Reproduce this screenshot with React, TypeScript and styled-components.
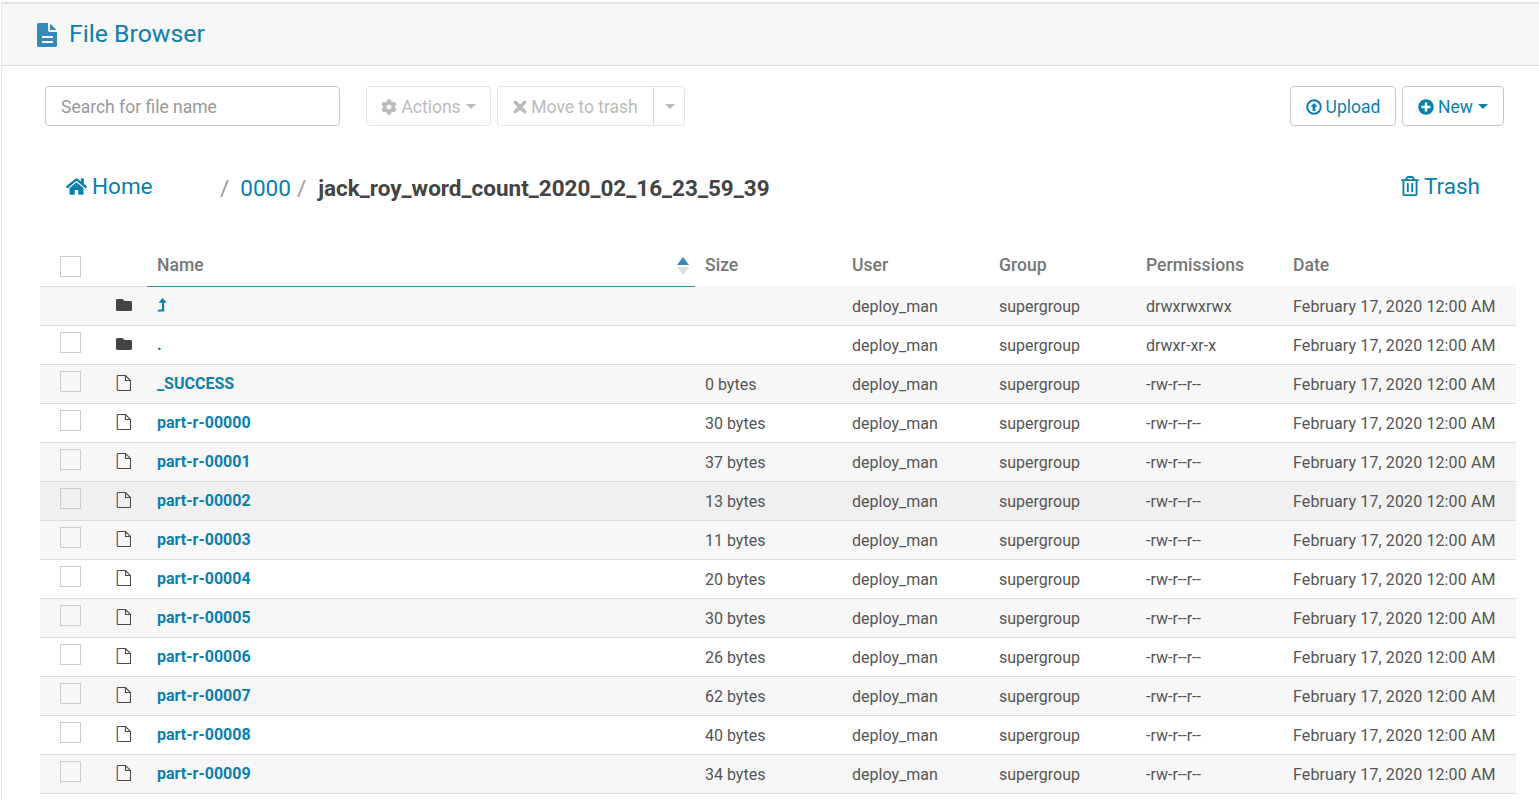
import React from "react";
import styled, { createGlobalStyle } from "styled-components";
import { FaCog, FaHome, FaFolder, FaPlusCircle, FaRegTrashAlt } from "react-icons/fa";

const Global = createGlobalStyle`
  html, body { margin: 0; padding: 0; background: #fff; overflow: hidden; }
  body { font-family: Roboto, "Liberation Sans", sans-serif; color: #444; }
  * { box-sizing: border-box; }
`;

const Page = styled.div`
  margin-top: 2px;
  margin-left: 1px;
  border-top: 2px solid #e3e3e3;
  border-left: 1px solid #e8e8e8;
  height: 798px;
`;
const TitleBar = styled.header`
  height: 62px;
  background: #f7f7f7;
  border-bottom: 1px solid #ddd;
  display: flex;
  align-items: center;
  padding: 0 0 0 35px;
  gap: 12px;
`;
const Title = styled.h1`
  margin: 0 0 2px;
  font-size: 24.8px;
  font-weight: 400;
  line-height: 28px;
  color: #0b7fad;
`;
const Toolbar = styled.div`
  display: flex;
  align-items: center;
  padding: 20px 35px 0 43px;
`;
const Search = styled.input`
  width: 295px;
  height: 40px;
  border: 1px solid #c8c8c8;
  border-radius: 4px;
  padding: 2px 15px 0;
  font: 400 17.5px Roboto, sans-serif;
  color: #444;
  margin-right: 26px;
  &::placeholder { color: #999; opacity: 1; }
`;
const Btn = styled.button<{ $w: number; $on?: boolean; $group?: "l" | "r" }>`
  width: ${(p) => p.$w}px;
  height: 40px;
  background: #fff;
  border: 1px solid ${(p) => (p.$on ? "#c8c8c8" : "#e6e6e6")};
  border-radius: ${(p) => (p.$group === "l" ? "4px 0 0 4px" : p.$group === "r" ? "0 4px 4px 0" : "4px")};
  ${(p) => (p.$group === "r" ? "border-left-color:#d8d8d8;" : "")}
  ${(p) => (p.$group === "l" ? "border-right:0;" : "")}
  color: ${(p) => (p.$on ? "#0b7fad" : "#bbb")};
  font: 400 17.5px Roboto, sans-serif;
  display: flex;
  align-items: center;
  justify-content: center;
  gap: 4px;
  padding: 1px 0 0;
`;
const Gap = styled.div<{ $w: number }>`
  width: ${(p) => p.$w}px;
  flex: none;
`;
const Spacer = styled.div`
  flex: 1;
`;
const Caret = styled.span`
  display: inline-block;
  width: 0;
  height: 0;
  margin-left: 1px;
  border-left: 5px solid transparent;
  border-right: 5px solid transparent;
  border-top: 5px solid currentColor;
`;
const Crumbs = styled.nav`
  display: flex;
  align-items: center;
  height: 44px;
  margin-top: 40px;
  padding: 0 59px 0 64px;
  font-size: 22.5px;
  color: #0b7fad;
`;
const HomeLink = styled.a`
  display: flex;
  align-items: center;
  gap: 5px;
  width: 154px;
  margin-top: -4px;
`;
const Sep = styled.span`
  color: #999;
  margin: 0 10px 0 0;
`;
const Crumb = styled.a`
  margin: 0 6px 0 1px;
`;
const Current = styled.strong`
  font-weight: 700;
  font-size: 22.5px;
  color: #444;
  margin-left: 2px;
`;
const TrashLink = styled.a`
  margin-left: auto;
  display: flex;
  align-items: center;
  gap: 4px;
  margin-top: -4px;
`;
const Table = styled.table`
  width: 1476px;
  margin: 34px 0 0 38px;
  border-collapse: collapse;
  table-layout: fixed;
`;
const Col = styled.col<{ $w: number }>`
  width: ${(p) => p.$w}px;
`;
const Th = styled.th<{ $sorted?: boolean }>`
  height: 42px;
  padding: 0 0 0 10px;
  text-align: left;
  font-size: 17.6px;
  font-weight: 500;
  color: #777;
  position: relative;
  vertical-align: middle;
  border-bottom: 1px solid ${(p) => (p.$sorted ? "#338bb8" : "transparent")};
`;
const Tr = styled.tr<{ $bg: string }>`
  background: ${(p) => p.$bg};
  height: 39px;
`;
const Td = styled.td`
  padding: 1px 0 0 10px;
  border-top: 1px solid #ddd;
  border-bottom: 1px solid #ddd;
  white-space: nowrap;
  color: #555;
  font-size: 16px;
  vertical-align: middle;
`;
const NameCell = styled(Td)`
  padding-top: 0;
`;
const DateCell = styled(Td)`
  letter-spacing: 0.12px;
`;
const CheckCell = styled.td`
  padding: 0 0 4px 20px;
  border-top: 1px solid #ddd;
  border-bottom: 1px solid #ddd;
`;
const HeadCheckCell = styled.th`
  padding: 4px 0 0 20px;
  vertical-align: middle;
`;
const Check = styled.div`
  width: 21px;
  height: 21px;
  border: 1.5px solid #ccc;
  background: transparent;
`;
const IconCell = styled.td`
  padding: 0 0 2px 9px;
  border-top: 1px solid #ddd;
  border-bottom: 1px solid #ddd;
  vertical-align: middle;
  color: #444;
`;
const IconWrap = styled.div`
  display: flex;
`;
const NameLink = styled.a`
  font-weight: 700;
  color: #0b7fad;
  font-size: 16px;
  display: inline-flex;
  align-items: center;
`;
const LevelSvg = styled.svg`
  margin-top: 2px;
`;
const SortArrows = styled.svg`
  position: absolute;
  right: 5px;
  top: 12px;
`;

type Row = { name: string; size: string; perm: string; kind: "up" | "dir" | "file"; noCheck?: boolean };
const rows: Row[] = [
  { name: "", size: "", perm: "drwxrwxrwx", kind: "up", noCheck: true },
  { name: ".", size: "", perm: "drwxr-xr-x", kind: "dir" },
  { name: "_SUCCESS", size: "0 bytes", perm: "-rw-r--r--", kind: "file" },
  ...[30, 37, 13, 11, 20, 30, 26, 62, 40, 34].map((n, i) => ({
    name: `part-r-0000${i}`,
    size: `${n} bytes`,
    perm: "-rw-r--r--",
    kind: "file" as const,
  })),
];

function DocIcon() {
  return (
    <svg width="20" height="24" viewBox="0 0 20 24">
      <path
        d="M1.5 0H11v7.5c0 .8.7 1.5 1.5 1.5H20v13.5c0 .8-.7 1.5-1.5 1.5h-17C.7 24 0 23.3 0 22.5v-21C0 .7.7 0 1.5 0zM13 0.6L19.4 7H13z"
        fill="#338bb8"
      />
      <path d="M5 13h11v2H5zM5 18h11v2H5z" fill="#f7f7f7" />
    </svg>
  );
}
function UploadIcon() {
  return (
    <svg width="16" height="16" viewBox="0 0 16 16" fill="none">
      <circle cx="8" cy="8" r="6.8" stroke="currentColor" strokeWidth="2" />
      <path d="M8 4l3.6 3.8H9.4V12H6.6V7.8H4.4z" fill="currentColor" />
    </svg>
  );
}
function TimesIcon() {
  return (
    <svg width="14" height="14" viewBox="0 0 14 14">
      <path d="M2.5 2.5l9 9M11.5 2.5l-9 9" stroke="currentColor" strokeWidth="3.6" strokeLinecap="round" />
    </svg>
  );
}
function FileOutline() {
  return (
    <svg width="15" height="16" viewBox="0 0 15 16" fill="none">
      <path d="M1.5 .5H9.5L14.5 5.5V15.5H1.5Z" stroke="#4a4a4a" strokeWidth="1.1" />
      <path d="M9.5 .5V5.5H14.5" stroke="#4a4a4a" strokeWidth="1.1" />
      <path d="M1 .5V15.5" stroke="#c98a4b" strokeWidth="1" />
    </svg>
  );
}
function LevelUp() {
  return (
    <LevelSvg width="10" height="14" viewBox="0 0 10 14">
      <path d="M5.5 0L9.6 4.8H7.1V13.4H0.4L1.7 11.5H5V4.8H1.6Z" fill="currentColor" />
    </LevelSvg>
  );
}

const columns = [67, 40, 548, 147, 147, 147, 147, 233];

export default function App() {
  return (
    <Page>
      <Global />
      <TitleBar>
        <DocIcon />
        <Title>File Browser</Title>
      </TitleBar>
      <Toolbar>
        <Search placeholder="Search for file name" />
        <Btn $w={125}>
          <FaCog size={16} /> Actions <Caret />
        </Btn>
        <Gap $w={6} />
        <Btn $w={156} $group="l">
          <TimesIcon /> Move to trash
        </Btn>
        <Btn $w={32} $group="r">
          <Caret />
        </Btn>
        <Spacer />
        <Btn $w={106} $on>
          <UploadIcon /> Upload
        </Btn>
        <Gap $w={6} />
        <Btn $w={102} $on>
          <FaPlusCircle size={16} /> New <Caret />
        </Btn>
      </Toolbar>
      <Crumbs>
        <HomeLink>
          <FaHome size={21} /> Home
        </HomeLink>
        <Sep>/</Sep>
        <Crumb>0000</Crumb>
        <Sep>/</Sep>
        <Current>jack_roy_word_count_2020_02_16_23_59_39</Current>
        <TrashLink>
          <FaRegTrashAlt size={20} /> Trash
        </TrashLink>
      </Crumbs>
      <Table>
        <colgroup>
          {columns.map((w, i) => (
            <Col key={i} $w={w} />
          ))}
        </colgroup>
        <thead>
          <tr>
            <HeadCheckCell colSpan={2}>
              <Check />
            </HeadCheckCell>
            <Th $sorted>
              Name
              <SortArrows width="14" height="20" viewBox="0 0 14 20">
                <path d="M7 1l6 8H1z" fill="#338bb8" />
                <path d="M7 19l6-8H1z" fill="#ddd" />
              </SortArrows>
            </Th>
            <Th>Size</Th>
            <Th>User</Th>
            <Th>Group</Th>
            <Th>Permissions</Th>
            <Th>Date</Th>
          </tr>
        </thead>
        <tbody>
          {rows.map((r, i) => (
            <Tr key={i} $bg={i === 5 ? "#f0f0f0" : i % 2 === 0 ? "#f7f7f7" : "#fff"}>
              <CheckCell>{!r.noCheck && <Check />}</CheckCell>
              <IconCell>
                <IconWrap>{r.kind === "file" ? <FileOutline /> : <FaFolder size={16} />}</IconWrap>
              </IconCell>
              <NameCell>
                <NameLink>{r.kind === "up" ? <LevelUp /> : r.name}</NameLink>
              </NameCell>
              <Td>{r.size}</Td>
              <Td>deploy_man</Td>
              <Td>supergroup</Td>
              <Td>{r.perm}</Td>
              <DateCell>February 17, 2020 12:00 AM</DateCell>
            </Tr>
          ))}
        </tbody>
      </Table>
    </Page>
  );
}
